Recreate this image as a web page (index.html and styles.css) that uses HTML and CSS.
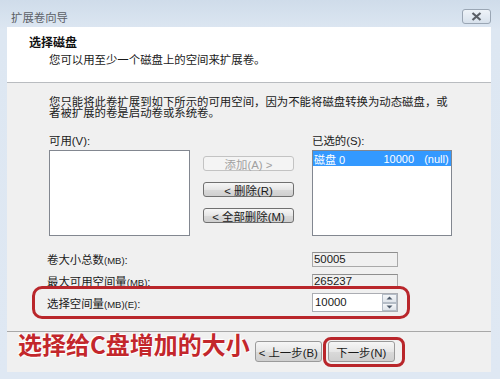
FILE: index.html
```html
<!DOCTYPE html>
<html lang="zh-CN">
<head>
    <meta charset="UTF-8">
    <title>扩展卷向导</title>
    <link rel="stylesheet" href="styles.css">
</head>
<body>
    <div class="window">
        <div class="titlebar">
            <span class="title">扩展卷向导</span>
            <span class="close">
                <svg width="11" height="9" viewBox="0 0 11 9"><path d="M1.5 1 L9.5 8 M9.5 1 L1.5 8" stroke="#5a5f66" stroke-width="2.2" fill="none"/></svg>
            </span>
        </div>
        <div class="dialog">
            <div class="header">
                <div class="header-title">选择磁盘</div>
                <div class="header-sub">您可以用至少一个磁盘上的空间来扩展卷。</div>
            </div>
            <div class="content">
                <p class="intro">您只能将此卷扩展到如下所示的可用空间，因为不能将磁盘转换为动态磁盘，或<br>者被扩展的卷是启动卷或系统卷。</p>
                <div class="lists">
                    <div class="list-col">
                        <div class="list-label">可用(V):</div>
                        <div class="listbox"></div>
                    </div>
                    <div class="move-buttons">
                        <div class="btn btn-small disabled">添加(A) &gt;</div>
                        <div class="btn btn-small">&lt; 删除(R)</div>
                        <div class="btn btn-small">&lt; 全部删除(M)</div>
                    </div>
                    <div class="list-col list-col-right">
                        <div class="list-label">已选的(S):</div>
                        <div class="listbox">
                            <div class="list-row selected">
                                <span class="cell-disk">磁盘 0</span>
                                <span class="cell-size">10000</span>
                                <span class="cell-name">(null)</span>
                            </div>
                        </div>
                    </div>
                </div>
                <div class="sizes">
                    <div class="size-row">
                        <span class="size-label">卷大小总数<small>(MB)</small>:</span>
                        <span class="size-box readonly">50005</span>
                    </div>
                    <div class="size-row">
                        <span class="size-label">最大可用空间量<small>(MB)</small>:</span>
                        <span class="size-box readonly">265237</span>
                    </div>
                    <div class="size-row size-row-input marked">
                        <span class="size-label">选择空间量<small>(MB)(E)</small>:</span>
                        <span class="size-box spin">
                            <span class="spin-value">10000</span>
                            <span class="spin-arrows">
                                <span class="spin-up"><svg width="7" height="4" viewBox="0 0 7 4"><path d="M0.5 3.5 L3.5 0.5 L6.5 3.5 Z" fill="#4d5a6b"/></svg></span>
                                <span class="spin-down"><svg width="7" height="4" viewBox="0 0 7 4"><path d="M0.5 0.5 L3.5 3.5 L6.5 0.5 Z" fill="#4d5a6b"/></svg></span>
                            </span>
                        </span>
                    </div>
                </div>
            </div>
            <div class="footer">
                <span class="note">选择给C盘增加的大小</span>
                <div class="btn btn-nav">&lt; 上一步(B)</div>
                <div class="btn btn-nav marked-btn">下一步(N)</div>
            </div>
        </div>
    </div>
</body>
</html>
```

FILE: styles.css
```css
body {
    margin: 0;
    width: 500px;
    height: 379px;
    overflow: hidden;
    font-family: "Liberation Sans", "Noto Sans CJK SC", sans-serif;
    color: #1a1a1a;
    background: #dbe6f2;
}
.window {
    height: 379px;
    box-sizing: border-box;
    padding: 0 9px 7px 7px;
    display: flex;
    flex-direction: column;
    background: linear-gradient(#cfdcea, #dde7f2 30px, #dfe8f3);
}
.titlebar {
    height: 27px;
    display: flex;
    align-items: flex-start;
}
.title {
    margin: 12px 0 0 4px;
    font-size: 11.4px;
    line-height: 12px;
    color: #5c6066;
}
.close {
    margin: 9px 0 0 auto;
    width: 27px;
    height: 13px;
    border: 1px solid #9aa6b4;
    border-radius: 3px;
    background: linear-gradient(#eef3f8, #d7e1ec);
    display: flex;
    align-items: center;
    justify-content: center;
}
.dialog {
    flex: 1;
    display: flex;
    flex-direction: column;
    background: #f0f0f0;
}
.header {
    height: 55px;
    background: #fff;
    border-bottom: 1px solid #b9bcc0;
    padding-left: 22px;
}
.header-title {
    margin-top: 10px;
    font-size: 12px;
    line-height: 13px;
    font-weight: 700;
    color: #111;
}
.header-sub {
    margin: 4px 0 0 20px;
    font-size: 11.4px;
    line-height: 12px;
}
.content {
    padding: 14px 0 0 42px;
    font-size: 11.4px;
}
.intro {
    margin: 0;
    line-height: 11px;
}
.lists {
    margin-top: 16px;
    display: flex;
}
.list-col {
    width: 141px;
}
.list-col-right {
    width: 140px;
    margin-left: 18px;
}
.list-label {
    line-height: 12px;
    margin-bottom: 3px;
}
.listbox {
    height: 84px;
    border: 1px solid #828790;
    background: #fff;
    overflow: hidden;
}
.list-row {
    display: flex;
    height: 15px;
    align-items: center;
    white-space: nowrap;
    font-size: 11px;
}
.list-row.selected {
    background: #3399ff;
    color: #fff;
}
.cell-disk {
    width: 70px;
    padding-left: 1px;
}
.cell-size {
    width: 40px;
}
.cell-name {
    padding-left: 1px;
    width: 27px;
    overflow: hidden;
}
.move-buttons {
    width: 91px;
    margin-left: 13px;
    padding-top: 21px;
    display: flex;
    flex-direction: column;
    gap: 11px;
}
.btn {
    box-sizing: border-box;
    border: 1px solid #707070;
    border-radius: 3px;
    background: linear-gradient(#f6f6f6, #e6e6e6 50%, #dadada 51%, #cfcfcf);
    display: flex;
    align-items: center;
    justify-content: center;
    white-space: nowrap;
}
.btn-small {
    height: 15px;
    font-size: 11.4px;
}
.btn.disabled {
    color: #a0a0a0;
    border-color: #c3c3c3;
    background: #f4f4f4;
}
.sizes {
    margin: 15px 0 0 -2px;
}
.size-row {
    display: grid;
    grid-template-columns: 265px 86px;
    align-items: center;
    width: 351px;
}
.size-row + .size-row {
    margin-top: 6px;
}
.size-row-input {
    margin-top: 4px !important;
}
.size-label small {
    font-size: 9.5px;
}
.size-box {
    box-sizing: border-box;
    height: 15px;
    border: 1px solid #a9a9a9;
    border-top-color: #8e8e8e;
    font-size: 11.4px;
    line-height: 13px;
    padding-left: 1px;
}
.size-box.readonly {
    background: #f0f0f0;
}
.size-box.spin {
    height: 19px;
    background: #fff;
    border-color: #abadb3;
    display: flex;
    align-items: center;
    padding-left: 2px;
}
.spin-value {
    flex: 1;
}
.spin-arrows {
    width: 15px;
    height: 17px;
    display: flex;
    flex-direction: column;
}
.spin-up,
.spin-down {
    flex: 1;
    border: 1px solid #b4bcc6;
    background: linear-gradient(#f4f6f9, #dfe4ea);
    display: flex;
    align-items: center;
    justify-content: center;
}
.marked,
.marked-btn {
    position: relative;
}
.marked::after {
    content: '';
    position: absolute;
    top: -7px;
    bottom: -7px;
    left: -15px;
    right: -12px;
    border: 3px solid #b9262b;
    border-radius: 10px;
}
.footer {
    margin-top: auto;
    height: 40px;
    border-top: 1px solid #a8a8a8;
    display: flex;
    align-items: flex-start;
    padding-left: 11px;
}
.note {
    margin-top: -2px;
    font-family: "Noto Sans CJK SC", sans-serif;
    font-size: 24px;
    line-height: 27px;
    font-weight: 700;
    color: #c3272c;
    text-shadow: 0 0 2px #fff, 1px 1px 1px #fff, -1px -1px 1px #fff;
    white-space: nowrap;
}
.btn-nav {
    margin-top: 9px;
    height: 21px;
    width: 67px;
    font-size: 11.4px;
    border-color: #9a9a9a;
}
.btn-nav:first-of-type {
    margin-left: 5px;
}
.btn-nav + .btn-nav {
    margin-left: 6px;
}
.marked-btn::after {
    content: '';
    position: absolute;
    top: -5px;
    bottom: -6px;
    left: -6px;
    right: -11px;
    border: 3px solid #b9262b;
    border-radius: 8px;
}
```
